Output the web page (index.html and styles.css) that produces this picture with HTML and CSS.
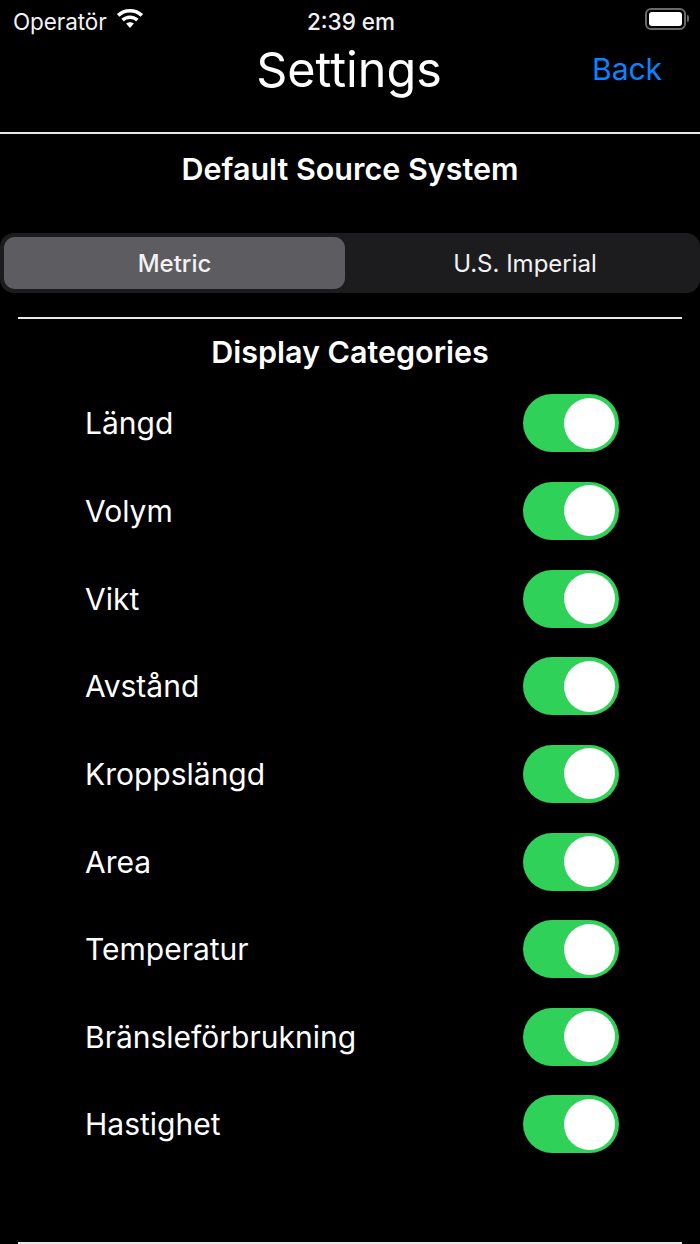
FILE: index.html
```html
<!DOCTYPE html>
<html lang="sv">
<head>
<meta charset="utf-8">
<title>Settings</title>
<link rel="stylesheet" href="styles.css">
</head>
<body>
<div class="status">
  <div class="status-left">
    <span>Operatör</span>
    <svg class="wifi" viewBox="0 0 28 20" width="30" height="21"><path d="M14 3.4c3.900 0 7.400 1.500 10.100 3.900L26.500 4.800C23.200 1.800 18.800 0 14 0S4.800 1.800 1.500 4.800l2.400 2.500C6.600 4.900 10.100 3.400 14 3.400z"/><path d="M14 9.600c2.200 0 4.200.8 5.800 2.200l2.400-2.500C20 7.300 17.100 6.100 14 6.100s-6 1.200-8.200 3.200l2.400 2.500c1.600-1.400 3.600-2.200 5.800-2.200z"/><path d="M14 12.500c-1.400 0-2.700.5-3.700 1.400L14 18l3.700-4.100c-1-.9-2.300-1.400-3.700-1.400z"/></svg>
  </div>
  <div class="status-time">2:39 em</div>
  <div class="status-right">
    <div class="battery"><div class="battery-fill"></div></div>
    <div class="battery-cap"></div>
  </div>
</div>
<header class="nav">
  <h1 class="title">Settings</h1>
  <a class="back">Back</a>
</header>
<div class="rule"></div>
<h2 class="source-heading">Default Source System</h2>
<div class="segmented">
  <div class="segment selected">Metric</div>
  <div class="segment">U.S. Imperial</div>
</div>
<div class="rule inset"></div>
<h2 class="categories-heading">Display Categories</h2>
<ul class="list">
  <li class="row"><span>Längd</span><span class="toggle"><span class="knob"></span></span></li>
  <li class="row"><span>Volym</span><span class="toggle"><span class="knob"></span></span></li>
  <li class="row"><span>Vikt</span><span class="toggle"><span class="knob"></span></span></li>
  <li class="row"><span>Avstånd</span><span class="toggle"><span class="knob"></span></span></li>
  <li class="row"><span>Kroppslängd</span><span class="toggle"><span class="knob"></span></span></li>
  <li class="row"><span>Area</span><span class="toggle"><span class="knob"></span></span></li>
  <li class="row"><span>Temperatur</span><span class="toggle"><span class="knob"></span></span></li>
  <li class="row"><span>Bränsleförbrukning</span><span class="toggle"><span class="knob"></span></span></li>
  <li class="row"><span>Hastighet</span><span class="toggle"><span class="knob"></span></span></li>
</ul>
<div class="rule inset"></div>
</body>
</html>
```
FILE: styles.css
```css
* { box-sizing: border-box; }
html, body { margin: 0; padding: 0; }
body {
  width: 700px;
  height: 1244px;
  overflow: hidden;
  background: #000;
  color: #fff;
  font-family: Inter, "Liberation Sans", sans-serif;
}
.status {
  height: 40px;
  padding: 2px 11px 0 13px;
  display: grid;
  grid-template-columns: 1fr auto 1fr;
  align-items: center;
  font-size: 22.5px;
  color: #f2f2f2;
}
.status-left { display: flex; align-items: center; gap: 8px; }
.status-left span { letter-spacing: -0.1px; }
.wifi { fill: #fff; margin-top: -3px; }
.status-time { font-weight: 500; font-size: 22.5px; }
.status-right { display: flex; align-items: center; justify-content: flex-end; gap: 1px; margin-top: -5px; }
.battery {
  width: 41px;
  height: 22px;
  border: 2px solid #6a6a6a;
  border-radius: 6px;
  padding: 2px;
}
.battery-fill { width: 100%; height: 100%; background: #fff; border-radius: 3px; }
.battery-cap { width: 2px; height: 7px; background: #6a6a6a; border-radius: 0 2px 2px 0; }
.nav {
  height: 92px;
  position: relative;
  display: flex;
  justify-content: center;
}
.title {
  margin: 0 2px 0 0;
  font-size: 48.5px;
  line-height: 60px;
  font-weight: 400;
}
.back {
  position: absolute;
  left: 592px;
  top: 9px;
  font-size: 30px;
  line-height: 40px;
  color: #0a84ff;
}
.rule { height: 2px; background: #e8e8e8; flex: none; }
.rule.inset { margin: 0 18px; }
.source-heading {
  margin: 15px 0 0;
  height: 84px;
  text-align: center;
  font-size: 30.500px;
  line-height: 40px;
  font-weight: 600;
}
.segmented {
  height: 60px;
  padding: 4px;
  border-radius: 14px;
  background: #1c1c1e;
  display: grid;
  grid-template-columns: 341px 1fr;
  column-gap: 9px;
  margin-bottom: 24px;
}
.segment {
  display: flex;
  align-items: center;
  justify-content: center;
  font-size: 24px;
  font-weight: 400;
  color: #f2f2f2;
  border-radius: 11px;
}
.segment.selected { background: #5d5d61; font-weight: 500; }
.categories-heading {
  margin: 13px 0 0;
  text-align: center;
  font-size: 30.500px;
  line-height: 40px;
  font-weight: 600;
}
.list {
  list-style: none;
  margin: 7.500px 0 0;
  padding: 0 81px 0 85px;
  height: 862.500px;
}
.row {
  height: 87.650px;
  display: flex;
  align-items: center;
  justify-content: space-between;
  font-size: 30px;
}
.toggle {
  width: 96px;
  height: 58px;
  border-radius: 29px;
  background: #30d158;
  display: flex;
  align-items: center;
  justify-content: flex-end;
  padding-right: 4px;
}
.knob {
  width: 51px;
  height: 51px;
  border-radius: 50%;
  background: #fff;
}
```
